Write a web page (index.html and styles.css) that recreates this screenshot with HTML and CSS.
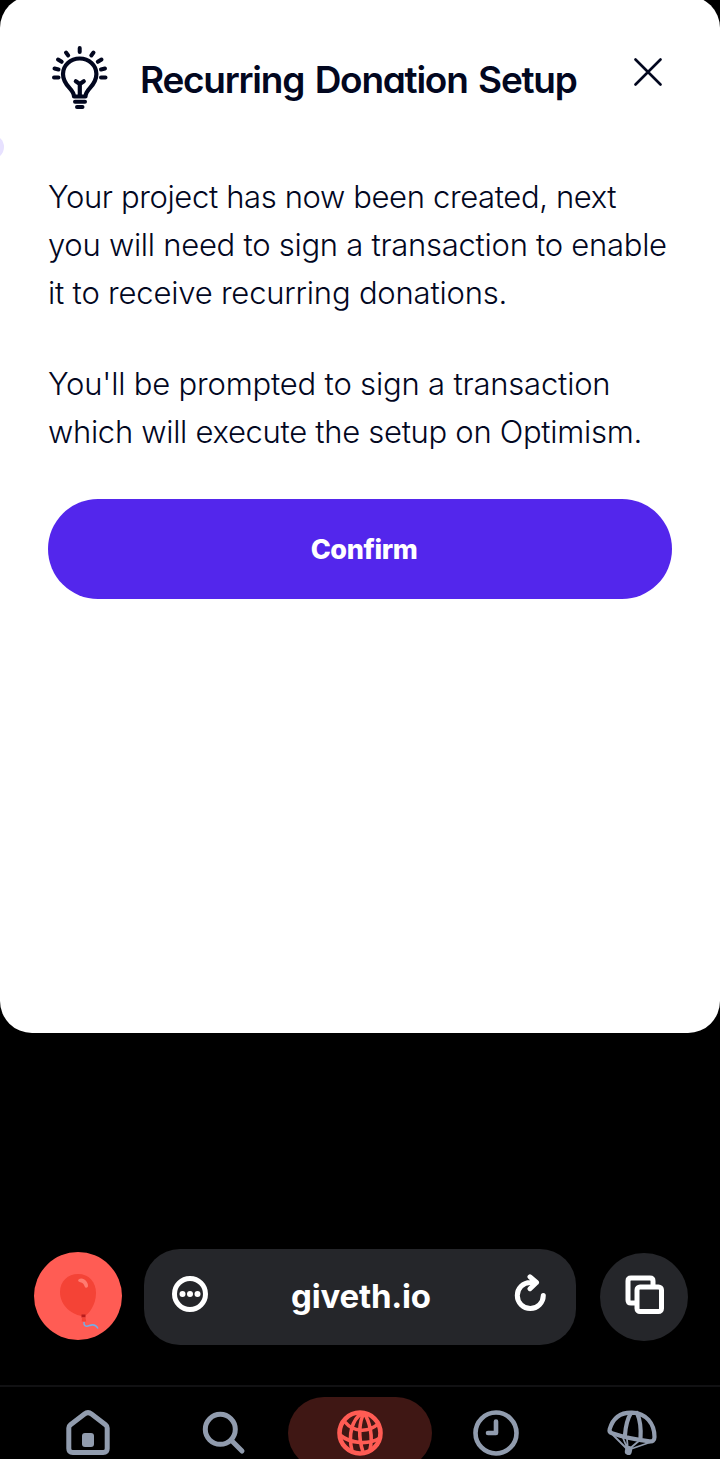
FILE: index.html
```html
<!DOCTYPE html>
<html lang="en">
<head>
<meta charset="utf-8">
<title>Recurring Donation Setup</title>
<link rel="stylesheet" href="styles.css">
</head>
<body>
<main class="sheet">
  <span class="edge-dot"></span>
  <header class="sheet-header">
    <svg class="bulb" viewBox="0 0 60 66" fill="none" stroke="#02071f" stroke-width="4" stroke-linecap="round" stroke-linejoin="round">
      <path d="M29.700 3v4M16 7.500l2.200 3M43.500 7.500l-2.200 3M8 14.500l3.700 2.300M51.500 14.500l-3.700 2.300M4.500 23.500l4 1M55 23.500l-4 1M4 32.500h4.500M55.500 32.500h-4.500"/>
      <path d="M24 51.500c0-8-11-10-11-22.500a16.700 15.500 0 0 1 33.400 0c0 12.500-10.900 14.500-10.900 22.500zM29.800 51V39M25.800 36.300l4 2.700 4-2.700" stroke-width="4.200"/>
      <path d="M25 56.700h10M27 61.900h5.500"/>
    </svg>
    <h1 class="title">Recurring Donation Setup</h1>
    <svg class="close" viewBox="0 0 28 28" stroke="#02071f" stroke-width="2.600" stroke-linecap="round"><path d="M1.500 1.500l25 25M26.500 1.500l-25 25"/></svg>
  </header>
  <section class="copy">
    <p class="para"><span class="line l1">Your project has now been created, next</span><span class="line l2">you will need to sign a transaction to enable</span><span class="line l3">it to receive recurring donations.</span></p>
    <p class="para"><span class="line l4">You'll be prompted to sign a transaction</span><span class="line l5">which will execute the setup on Optimism.</span></p>
  </section>
  <button class="confirm">Confirm</button>
</main>
<div class="toolbar">
  <div class="avatar">
    <svg viewBox="0 0 88 88" width="88" height="88">
      <circle cx="44" cy="44" r="44" fill="#ff5c54"/>
      <path d="M44 22c11 0 18 8 18 19 0 12-7 21-12 23.500C38 63 26 54 26 40c0-11 8-18 18-18z" fill="#f44336"/>
      <path d="M44.500 27.500c4-3.500 10 2 9.500 6.500-.2 2-2.600 2.200-3.300.4-1-2.800-2-3.700-4.400-4.200-1.800-.3-2.700-1.500-1.800-2.700z" fill="#ff7b70"/>
      <path d="M47.500 62.500h4v3h-4z" fill="#b71c1c"/><path d="M48 65.500h3.500l.7 4h-4.500z" fill="#f44336"/>
      <path d="M50 70c-.5 4 2 5 5.500 3.500 4-1.500 6.500-.5 8.500 3" fill="none" stroke="#74aee8" stroke-width="1.500"/>
    </svg>
  </div>
  <div class="address">
    <svg class="more" viewBox="0 0 36 36"><circle cx="18" cy="18" r="15.500" fill="none" stroke="#fff" stroke-width="5"/><g fill="#fff"><circle cx="10.500" cy="18" r="3"/><circle cx="18" cy="18" r="3"/><circle cx="25.500" cy="18" r="3"/></g></svg>
    <span class="host">giveth.io</span>
    <svg class="reload" viewBox="0 0 32 38" fill="none" stroke="#fff" stroke-width="5" stroke-linecap="round" stroke-linejoin="round"><path d="M29.300 21.500a13 13 0 1 1-13-13h6M16 2.800l6.500 5.700-6.500 6.200"/></svg>
  </div>
  <div class="tabs">
    <svg viewBox="0 0 40 40" width="40" height="40" fill="none" stroke="#fff" stroke-width="5" stroke-linejoin="round"><path d="M10 28H6q-3 0-3-3V6q0-3 3-3h19q3 0 3 3v5"/><rect x="12" y="12" width="24.500" height="24.500" rx="3"/></svg>
  </div>
</div>
<nav class="nav">
  <div class="item"><svg width="48" height="48" viewBox="0 0 48 48" fill="none" stroke="#919cae" stroke-width="5" stroke-linejoin="round"><path d="M4.800 19q0-2 1.700-3.300l14-10.800q3.500-2.600 7 0l14 10.800q1.700 1.300 1.700 3.300v20.500q0 4-4 4H8.800q-4 0-4-4z"/><rect x="18" y="24" width="12" height="14" rx="3" fill="#919cae" stroke="none"/></svg></div>
  <div class="item"><svg width="48" height="48" viewBox="0 0 48 48" fill="none" stroke="#919cae" stroke-width="5" stroke-linecap="round"><circle cx="20.300" cy="20.300" r="15"/><path d="M31 31l11 11"/></svg></div>
  <div class="item active"><svg width="48" height="48" viewBox="0 0 48 48" fill="none" stroke="#ff5c54" stroke-width="3.600"><circle cx="24" cy="24" r="20.500" stroke-width="4.600"/><path d="M26 4C16 11 12 25 16 42M28 4c-5 9-6 24-1 39M28 4c6 9 9 23 6 37M9 13c8 10 23 11 33 2M4 26c11 9 28 10 40 3"/></svg></div>
  <div class="item"><svg width="48" height="48" viewBox="0 0 48 48" fill="none" stroke="#919cae" stroke-width="4.600" stroke-linecap="round" stroke-linejoin="round"><circle cx="24" cy="24" r="20.500"/><path d="M24 12.500V24h-8"/></svg></div>
  <div class="item"><svg width="52" height="48" viewBox="0 0 52 48" fill="none" stroke="#919cae" stroke-width="4.200" stroke-linecap="round" stroke-linejoin="round"><path d="M3.700 20C7 9 15 3.300 26 3.600c14 .4 22.500 11 22.500 24.400 0 3.500-2 5-5 4.300Q23 30 6 24.300q-3.200-1-2.300-4.300zM25 4q-5 8-6 22M31 4q4.500 10 3.500 25"/><path stroke-width="1.800" d="M7 26l15 15M17 29l5 12 12-10M22 41l23-8M21 30l1 11"/><path stroke-width="7" d="M22.700 40.500l-.4 2"/></svg></div>
</nav>
</body>
</html>
```
FILE: styles.css
```css
* { box-sizing: border-box; }
body { margin: 0; width: 720px; height: 1459px; overflow: hidden; background: #000; color: #02071f; font-family: Inter, "Liberation Sans", sans-serif; }
svg { display: block; flex: none; }
.sheet { position: relative; overflow: hidden; height: 1037px; margin-top: -4px; padding: 4px 48px 0; background: #fff; border-radius: 32px; }
.edge-dot { position: absolute; left: -20px; top: 139px; width: 24px; height: 24px; border-radius: 50%; background: #e7e1ff; }
.sheet-header { display: flex; align-items: flex-start; height: 173px; padding-top: 44px; }
.bulb { width: 60px; height: 66px; margin: 1px 0 0 2px; }
.title { flex: 1; margin: 11px 0 0 30px; font-size: 37px; line-height: 50px; font-weight: 600; letter-spacing: -1.25px; word-spacing: 2.500px; font-feature-settings: "cv11"; white-space: nowrap; }
.close { width: 28px; height: 28px; margin: 14px 10px 0 0; }
.copy { display: flex; flex-direction: column; gap: 43px; }
.para { margin: 0; font-size: 31px; font-weight: 300; line-height: 48px; white-space: nowrap; }
.line { display: block; }
.l1 { letter-spacing: -0.37px; }
.l2 { letter-spacing: -0.27px; }
.l3 { letter-spacing: -0.2px; }
.l4 { letter-spacing: -0.19px; }
.l5 { letter-spacing: -0.3px; }
.confirm { display: block; width: 624px; height: 100px; margin-top: 43px; padding: 0 0 0 8px; border: 0; border-radius: 50px; background: #5326ec; color: #fff; font-family: inherit; font-size: 27px; font-weight: 800; letter-spacing: -0.4px; }
.toolbar { display: flex; align-items: center; height: 96px; margin-top: 216px; padding: 0 32px 0 34px; }
.avatar { width: 88px; height: 88px; margin-top: -2px; }
.address { display: flex; align-items: center; justify-content: space-between; width: 432px; height: 96px; margin-left: 22px; padding: 0 30px 0 28px; border-radius: 36px; background: #25262a; }
.more { width: 36px; height: 36px; margin-top: -6px; }
.host { margin: -2px 0 0 0; color: #fff; font-size: 33px; font-weight: 700; letter-spacing: -0.2px; }
.reload { width: 32px; height: 38px; margin-top: -8px; }
.tabs { display: grid; place-items: center; width: 88px; height: 88px; margin-left: 24px; padding: 0 0 4px 1px; border-radius: 50%; background: #25262a; }
.nav { display: flex; height: 74px; margin-top: 40px; padding: 10px 20px 0; border-top: 2px solid #111113; }
.item { display: flex; flex: none; justify-content: center; width: 136px; height: 72px; padding-top: 12px; border-radius: 36px; }
.active { width: 144px; margin: 0 -4px; background: #3f1714; }
```
